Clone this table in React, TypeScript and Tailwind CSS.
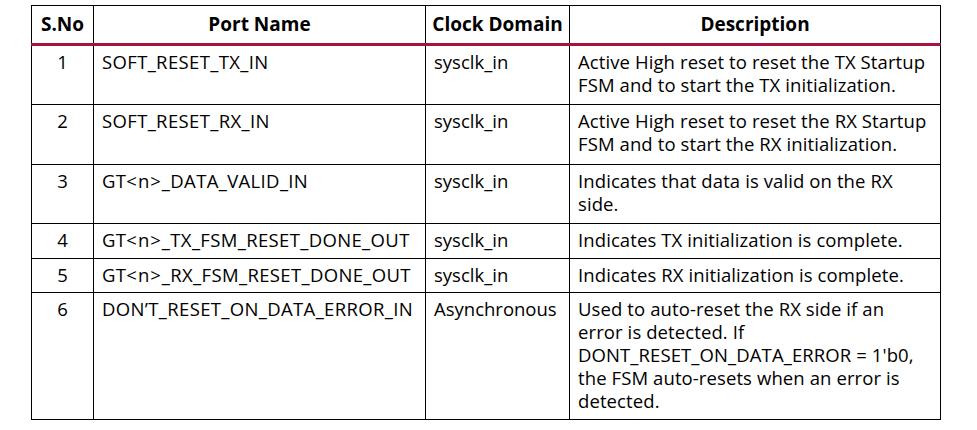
const ROWS = [
  {
    no: "1",
    port: "SOFT_RESET_TX_IN",
    clock: "sysclk_in",
    desc: ["Active High reset to reset the TX Startup", "FSM and to start the TX initialization."],
    h: "h-[60px]",
  },
  {
    no: "2",
    port: "SOFT_RESET_RX_IN",
    clock: "sysclk_in",
    desc: ["Active High reset to reset the RX Startup", "FSM and to start the RX initialization."],
    h: "h-[60px]",
  },
  {
    no: "3",
    port: "GT<n>_DATA_VALID_IN",
    clock: "sysclk_in",
    desc: ["Indicates that data is valid on the RX", "side."],
    h: "h-[59px]",
  },
  {
    no: "4",
    port: "GT<n>_TX_FSM_RESET_DONE_OUT",
    clock: "sysclk_in",
    desc: ["Indicates TX initialization is complete."],
    h: "h-[35px]",
  },
  {
    no: "5",
    port: "GT<n>_RX_FSM_RESET_DONE_OUT",
    clock: "sysclk_in",
    desc: ["Indicates RX initialization is complete."],
    h: "h-[34px]",
  },
  {
    no: "6",
    port: "DON’T_RESET_ON_DATA_ERROR_IN",
    clock: "Asynchronous",
    desc: [
      "Used to auto-reset the RX side if an",
      "error is detected. If",
      "DONT_RESET_ON_DATA_ERROR = 1'b0,",
      "the FSM auto-resets when an error is",
      "detected.",
    ],
    h: "h-[127px]",
  },
];

// GT<n> names are spaced a bit around the angle brackets in the source doc
function PortName({ name }: { name: string }) {
  const parts = name.split(/(<n>)/);
  return (
    <>
      {parts.map((p, i) =>
        p === "<n>" ? (
          <span key={i} className="tracking-[1px]">
            {"<n>"}
          </span>
        ) : (
          <span key={i}>{p}</span>
        )
      )}
    </>
  );
}

export default function App() {
  return (
    <div
      className="w-[977px] h-[430px] bg-white pl-[31px] pt-[5px] text-black"
      style={{ fontFamily: '"Open Sans", "Noto Sans", sans-serif' }}
    >
      <table className="border-collapse table-fixed w-[909px] text-[18.5px] leading-[23px]">
        <colgroup>
          <col className="w-[62px]" />
          <col className="w-[332px]" />
          <col className="w-[144px]" />
          <col className="w-[371px]" />
        </colgroup>
        <thead>
          <tr className="h-[39px] border-b-[3px] border-b-[#a8123e]">
            <th className="border border-black font-bold text-center align-middle text-[19px]">S.No</th>
            <th className="border border-black font-bold text-center align-middle text-[19px]">Port Name</th>
            <th className="border border-black font-bold text-center align-middle text-[19px] whitespace-nowrap">Clock Domain</th>
            <th className="border border-black font-bold text-center align-middle text-[19px]">Description</th>
          </tr>
        </thead>
        <tbody>
          {ROWS.map((r) => (
            <tr key={r.no} className={r.h}>
              <td className="border border-black align-top text-center pt-[4px]">{r.no}</td>
              <td className="border border-black align-top pl-[8px] pt-[4px] whitespace-nowrap tracking-[0.35px]">
                <PortName name={r.port} />
              </td>
              <td className="border border-black align-top pl-[8px] pt-[4px]">{r.clock}</td>
              <td className="border border-black align-top pl-[8px] pt-[4px] tracking-[0.1px]">
                {r.desc.map((line, i) => (
                  <div key={i} className="whitespace-nowrap">
                    {line}
                  </div>
                ))}
              </td>
            </tr>
          ))}
        </tbody>
      </table>
    </div>
  );
}
